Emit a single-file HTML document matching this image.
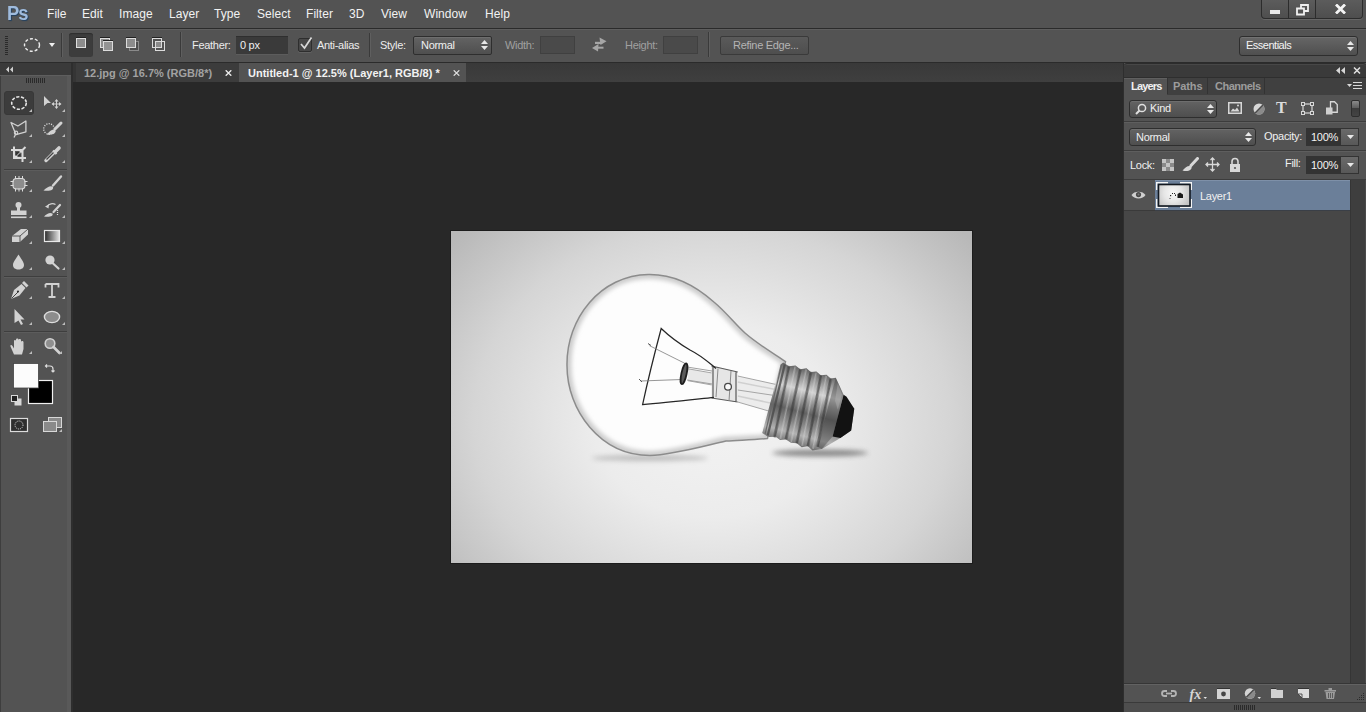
<!DOCTYPE html>
<html><head><meta charset="utf-8">
<style>
*{margin:0;padding:0;box-sizing:border-box}
html,body{width:1366px;height:712px;overflow:hidden;background:#282828;font-family:"Liberation Sans",sans-serif;}
.a{position:absolute}
#menubar{left:0;top:0;width:1366px;height:28px;background:#535353}
#menubar .m{position:absolute;top:7px;font-size:12px;letter-spacing:0.05px;color:#f2f2f2;line-height:14px;white-space:nowrap}
#mline{left:0;top:28px;width:1366px;height:1px;background:#2b2b2b}
#opts{left:0;top:29px;width:1366px;height:33px;background:#535353;border-top:1px solid #5e5e5e}
#oline{left:0;top:62px;width:1366px;height:1px;background:#2b2b2b}
#tools{left:0;top:63px;width:71px;height:649px;background:linear-gradient(90deg,#535353 66px,#595959 66px);border-left:1px solid #3e3e3e}
#toolhdr{left:0;top:63px;width:71px;height:13px;background:#3a3a3a;border-bottom:1px solid #5e5e5e}
#tline{left:71px;top:63px;width:2px;height:649px;background:#2e2e2e}
#tabs{left:73px;top:63px;width:1050px;height:19px;background:linear-gradient(#393939,#3f3f3f)}
#paste{left:73px;top:82px;width:1050px;height:630px;background:#282828}
#img{left:451px;top:231px;width:521px;height:332px;background:radial-gradient(ellipse 70% 75% at 52% 45%,#f4f4f4 0%,#e8e8e8 40%,#c2c2c2 100%)}
#rpanel{left:1124px;top:63px;width:242px;height:649px;background:#535353}
#rline{left:1123px;top:63px;width:1px;height:649px;background:#2e2e2e}
.txt{position:absolute;white-space:nowrap;font-size:11px;color:#e6e6e6;line-height:13px;letter-spacing:-0.3px}
.txt.b{letter-spacing:0;font-weight:bold}
</style></head><body>
<div id="menubar" class="a">
  <div class="m" style="left:47px">File</div>
  <div class="m" style="left:82px">Edit</div>
  <div class="m" style="left:119px">Image</div>
  <div class="m" style="left:169px">Layer</div>
  <div class="m" style="left:214px">Type</div>
  <div class="m" style="left:257px">Select</div>
  <div class="m" style="left:306px">Filter</div>
  <div class="m" style="left:349px">3D</div>
  <div class="m" style="left:381px">View</div>
  <div class="m" style="left:424px">Window</div>
  <div class="m" style="left:485px">Help</div>
</div>

<div class="a" style="left:7px;top:1px;font-size:20px;font-weight:bold;color:#9fbbdd;letter-spacing:-1px;line-height:24px;transform:scaleX(0.92);transform-origin:0 0;text-shadow:1px 1px 1px #23405f">Ps</div>
<div class="a" id="winctl" style="left:1261px;top:0;width:102px;height:19px;border:1px solid #2c2c2c;border-top:none;border-radius:0 0 4px 4px;background:linear-gradient(#5c5c5c,#4e4e4e);box-shadow:0 1px 0 #666">
 <div class="a" style="left:26px;top:0;width:1px;height:18px;background:#2c2c2c"></div>
 <div class="a" style="left:53px;top:0;width:1px;height:18px;background:#2c2c2c"></div>
 <div class="a" style="left:8px;top:10px;width:10px;height:4px;background:#e8e8e8"></div>
 <svg class="a" style="left:34px;top:4px" width="14" height="12" viewBox="0 0 14 12"><path d="M5 1h7v6h-7z" fill="none" stroke="#f0f0f0" stroke-width="1.8"/><path d="M1 4.5h7v6H1z" fill="#525252" stroke="#f0f0f0" stroke-width="1.8"/></svg>
 <svg class="a" style="left:73px;top:4px" width="11" height="10" viewBox="0 0 11 10"><path d="M1 0.5L10 9.5M10 0.5L1 9.5" stroke="#f4f4f4" stroke-width="2.8"/></svg>
</div>
<div id="mline" class="a"></div>
<div id="opts" class="a"></div>

<div id="optsc" class="a" style="left:0;top:29px;width:1366px;height:33px">
 <div class="a" style="left:5px;top:7px;width:3px;height:19px;background:repeating-linear-gradient(#2a2a2a 0 1px,transparent 1px 2px)"></div>
 <svg class="a" style="left:23px;top:8px" width="18" height="16" viewBox="0 0 18 16"><ellipse cx="9" cy="8" rx="7.5" ry="6.3" fill="none" stroke="#ececec" stroke-width="1.4" stroke-dasharray="3 2"/></svg>
 <svg class="a" style="left:49px;top:14px" width="6" height="4"><path d="M0 0h6L3 4z" fill="#f0f0f0"/></svg>
 <div class="a" style="left:61px;top:4px;width:1px;height:24px;background:#3a3a3a;box-shadow:1px 0 0 #5f5f5f"></div>
 <div class="a" style="left:69px;top:4px;width:24px;height:24px;background:#3c3c3c;border-radius:3px;box-shadow:inset 0 1px 1px #2e2e2e"></div>
 <div class="a" style="left:76px;top:9px;width:10px;height:10px;border:1px solid #dedede;background:#8c8c8c;box-shadow:0 -1px 0 #222"></div>
 <div class="a" style="left:100px;top:9px;width:10px;height:10px;border:1px solid #dcdcdc;background:#8c8c8c;box-shadow:0 -1px 0 #222"></div>
 <div class="a" style="left:103px;top:12px;width:10px;height:10px;border:1px solid #dcdcdc;background:#939393;box-shadow:0 -1px 0 #222"></div>
 <div class="a" style="left:129px;top:12px;width:10px;height:10px;border:1px solid #8a8a8a;background:#4e4e4e"></div>
 <div class="a" style="left:126px;top:9px;width:10px;height:10px;border:1px solid #dcdcdc;background:#8c8c8c;box-shadow:0 -1px 0 #222"></div>
 <div class="a" style="left:152px;top:9px;width:10px;height:10px;border:1px solid #dcdcdc;background:transparent;box-shadow:0 -1px 0 #222"></div>
 <div class="a" style="left:156px;top:13px;width:5px;height:5px;background:#8c8c8c"></div>
 <div class="a" style="left:155px;top:12px;width:10px;height:10px;border:1px solid #dcdcdc"></div>
 <div class="a" style="left:180px;top:3px;width:1px;height:25px;background:#3a3a3a;box-shadow:1px 0 0 #5f5f5f"></div>
 <div class="txt" style="left:192px;top:10px;color:#ececec">Feather:</div>
 <div class="a" style="left:236px;top:7px;width:52px;height:18px;background:#3a3a3a;box-shadow:inset 0 1px 0 #2f2f2f,0 1px 0 #5c5c5c"></div>
 <div class="txt" style="left:240px;top:10px;color:#f0f0f0">0 px</div>
 <div class="a" style="left:298px;top:9px;width:14px;height:14px;background:#484848;border:1px solid #2e2e2e;border-radius:2px;box-shadow:0 1px 0 #626262"></div>
 <svg class="a" style="left:299px;top:7px" width="14" height="14" viewBox="0 0 14 14"><path d="M2 8L5.5 12L12.5 1.5" fill="none" stroke="#d8d8d8" stroke-width="1.7"/></svg>
 <div class="txt" style="left:317px;top:10px;color:#ececec">Anti-alias</div>
 <div class="a" style="left:369px;top:4px;width:1px;height:24px;background:#3a3a3a;box-shadow:1px 0 0 #5f5f5f"></div>
 <div class="txt" style="left:380px;top:10px;color:#ececec">Style:</div>
 <div class="a" style="left:413px;top:7px;width:79px;height:19px;border:1px solid #2e2e2e;border-radius:2px;background:linear-gradient(#636363,#4f4f4f);box-shadow:inset 0 1px 0 #6e6e6e"></div>
 <div class="txt" style="left:421px;top:10px;color:#f0f0f0">Normal</div>
 <svg class="a" style="left:481px;top:10px" width="7" height="12" viewBox="0 0 7 12"><path d="M0 5L3.5 1L7 5zM0 7L3.5 11L7 7z" fill="#e8e8e8"/></svg>
 <div class="txt" style="left:505px;top:10px;color:#a0a0a0">Width:</div>
 <div class="a" style="left:540px;top:7px;width:35px;height:18px;background:#4a4a4a;border:1px solid #404040"></div>
 <svg class="a" style="left:591px;top:8px" width="17" height="16" viewBox="0 0 17 16"><path d="M8.5 0.6L15.5 4.2L9.5 8z" fill="#a6a6a6"/><rect x="4" y="4.8" width="6" height="2.2" fill="#a6a6a6"/><path d="M1 11L7.5 7L7 14.6z" fill="#a6a6a6"/><rect x="6.5" y="9.7" width="6" height="2" fill="#a6a6a6"/></svg>
 <div class="txt" style="left:625px;top:10px;color:#a0a0a0">Height:</div>
 <div class="a" style="left:663px;top:7px;width:35px;height:18px;background:#4a4a4a;border:1px solid #404040"></div>
 <div class="a" style="left:708px;top:3px;width:1px;height:25px;background:#3a3a3a;box-shadow:1px 0 0 #5f5f5f"></div>
 <div class="a" style="left:720px;top:7px;width:89px;height:19px;border:1px solid #3a3a3a;border-radius:2px;background:linear-gradient(#5a5a5a,#4e4e4e)"></div>
 <div class="txt" style="left:733px;top:10px;color:#b4b4b4">Refine Edge...</div>
 <div class="a" style="left:1239px;top:7px;width:119px;height:20px;border:1px solid #2e2e2e;border-radius:3px;background:linear-gradient(#666,#4f4f4f);box-shadow:inset 0 1px 0 #727272"></div>
 <div class="txt" style="left:1246px;top:10px;color:#f4f4f4;letter-spacing:-0.5px">Essentials</div>
 <svg class="a" style="left:1347px;top:11px" width="7" height="12" viewBox="0 0 7 12"><path d="M0 5L3.5 1L7 5zM0 7L3.5 11L7 7z" fill="#e8e8e8"/></svg>
</div>
<div id="oline" class="a"></div>
<div id="tools" class="a"></div>
<div id="toolhdr" class="a"></div>

<svg class="a" style="left:0;top:0" width="71" height="712" viewBox="0 0 71 712">
 <path d="M6 66.5L9 69.5L6 72.5zM10 66.5L13 69.5L10 72.5z" fill="#d0d0d0" transform="translate(19,0) scale(-1,1) translate(0,0)"/>
 <g fill="#2a2a2a"><rect x="26" y="78" width="1" height="5"/><rect x="28" y="78" width="1" height="5"/><rect x="30" y="78" width="1" height="5"/><rect x="32" y="78" width="1" height="5"/><rect x="34" y="78" width="1" height="5"/><rect x="36" y="78" width="1" height="5"/><rect x="38" y="78" width="1" height="5"/><rect x="40" y="78" width="1" height="5"/><rect x="42" y="78" width="1" height="5"/><rect x="44" y="78" width="1" height="5"/></g>
 <rect x="4.5" y="91.5" width="29" height="23" rx="2.5" fill="#3c3c3c" stroke="#383838"/>
 <ellipse cx="19" cy="103" rx="7.3" ry="6.3" fill="none" stroke="#e6e6e6" stroke-width="1.6" stroke-dasharray="3.2 1.6"/>
 <path d="M44 96L51 103H47.5L44 106z" fill="#d2d2d2"/>
 <path d="M56.5 100.5V107.5M52.5 104H60.5" fill="none" stroke="#d2d2d2" stroke-width="1"/><path d="M56.5 99L54.5 101.5H58.5zM56.5 109L54.5 106.5H58.5zM51.5 104L54 102V106zM61.5 104L59 102V106z" fill="#d2d2d2"/>
 <path d="M11 122.5L17.9 126L25.9 121V131.8L16 134.7z" fill="none" stroke="#d2d2d2" stroke-width="1.3" stroke-linejoin="round"/>
 <circle cx="16" cy="132.8" r="1.7" fill="none" stroke="#d2d2d2" stroke-width="1.1"/><path d="M15.5 134.5L14 137.5" stroke="#d2d2d2" stroke-width="1.2"/>
 <circle cx="49" cy="129" r="5.3" fill="none" stroke="#dcdcdc" stroke-width="1.3" stroke-dasharray="1.1 1.3"/>
 <path d="M61 123L55.5 128.5" stroke="#d2d2d2" stroke-width="3" stroke-linecap="round"/>
 <path d="M47 134.5C49.5 131 52.5 128.5 55.5 130C56.5 133 53 135.5 47 134.5z" fill="#d2d2d2"/>
 <path d="M11 150H22.5V162M14 146.5V158H26M15 157.5L25.5 147" fill="none" stroke="#dadada" stroke-width="2"/>
 <rect x="16" y="152" width="4.5" height="4" fill="#333"/><path d="M16 156.5L21.5 151" stroke="#ddd" stroke-width="1"/>
 <path d="M46 160.5L54.5 152" stroke="#d2d2d2" stroke-width="3.4" stroke-linecap="round"/>
 <path d="M46.5 159.5L54 152" stroke="#444" stroke-width="1.2"/>
 <path d="M53 150.5L56.5 154" stroke="#d2d2d2" stroke-width="2.2"/>
 <path d="M55.5 151.5L59 148" stroke="#d2d2d2" stroke-width="3.6" stroke-linecap="round"/>
 <rect x="4" y="169" width="63" height="1" fill="#3e3e3e"/><rect x="4" y="170" width="63" height="1" fill="#5c5c5c"/>
 <rect x="13" y="178.5" width="12" height="10.5" rx="3.5" fill="#8c8c8c" stroke="#dcdcdc" stroke-width="1.1"/>
 <path d="M15.5 176V179M19 176V179M22.5 176V179M15.5 188.5V191.5M19 188.5V191.5M22.5 188.5V191.5M10.5 181.5H13.5M10.5 185.5H13.5M24.5 181.5H27.5M24.5 185.5H27.5" stroke="#dcdcdc" stroke-width="1"/>
 <path d="M61 176.5L53 185.5" stroke="#d2d2d2" stroke-width="2.4" stroke-linecap="round"/>
 <path d="M43.5 190.5C47 187 51 185 53 187C54 190 50 191.5 43.5 190.5z" fill="#d2d2d2"/>
 <circle cx="18.5" cy="205" r="3" fill="#d2d2d2"/><rect x="17" y="206" width="3" height="5" fill="#d2d2d2"/>
 <rect x="11" y="210.5" width="15.5" height="4.5" fill="#d2d2d2"/><rect x="11" y="216.5" width="15.5" height="1.6" fill="#d2d2d2"/>
 <path d="M47 206.5C49 203.5 53 203 55.5 204.5" fill="none" stroke="#d2d2d2" stroke-width="1.3"/><path d="M45 206.5L49 204.5L48.5 208.5z" fill="#d2d2d2"/>
 <path d="M60 205L53.5 212" stroke="#d2d2d2" stroke-width="2.2" stroke-linecap="round"/>
 <path d="M44 216.5C47 213.5 50 212 52.5 213.5C53.5 216 50 217.5 44 216.5z" fill="#d2d2d2"/>
 <path d="M57.5 210V216" stroke="#ddd" stroke-width="1.2" stroke-dasharray="1 1"/>
 <path d="M12 236L21 229H28L28 234.5L20 242H12z" fill="#d2d2d2"/><path d="M12 236H20L28 229M20 236V242" fill="none" stroke="#4a4a4a" stroke-width="0.9"/>
 <defs><linearGradient id="gr" x1="0" x2="1"><stop offset="0" stop-color="#2a2a2a"/><stop offset="1" stop-color="#e4e4e4"/></linearGradient></defs>
 <rect x="44.5" y="230.5" width="15" height="11" fill="url(#gr)" stroke="#e8e8e8" stroke-width="1.2"/>
 <path d="M18.5 254.5C16 259 13 262 13 265C13 268 15.5 269.5 18.5 269.5C21.5 269.5 24 268 24 265C24 262 21 259 18.5 254.5z" fill="#d2d2d2"/>
 <circle cx="50" cy="260" r="4.6" fill="#d2d2d2"/><path d="M52.5 263L58.5 268.5" stroke="#d2d2d2" stroke-width="2.2" stroke-linecap="round"/>
 <rect x="4" y="276" width="63" height="1" fill="#3e3e3e"/><rect x="4" y="277" width="63" height="1" fill="#5c5c5c"/>
 <path d="M11 299L14 290L21.5 284L25.5 288L19.5 295.5z" fill="#d2d2d2"/>
 <path d="M22 283L24 281L28.5 285.5L26.5 287.5z" fill="#d2d2d2"/>
 <path d="M11.5 298.5L18 292" stroke="#444" stroke-width="1"/><circle cx="18" cy="291.5" r="1.1" fill="#333"/>
 <path d="M45.5 284H58.5V287.5M45.5 284V287.5M52 284V297M48.5 297H55.5" fill="none" stroke="#d2d2d2" stroke-width="1.8"/>
 <path d="M14.5 309L24.5 319.5H20.5L23 324L21 325L18.5 320.5L14.5 323z" fill="#d2d2d2"/>
 <ellipse cx="52" cy="317" rx="7.6" ry="5.6" fill="#8c8c8c" stroke="#dedede" stroke-width="1.4"/>
 <rect x="4" y="331" width="63" height="1" fill="#3e3e3e"/><rect x="4" y="332" width="63" height="1" fill="#5c5c5c"/>
 <path d="M14 354.5L10.5 346.5C10 345 11.5 344.5 12.5 346L14 348.5V341C14 339.5 16 339.5 16 341V346V339.5C16 338 18.5 338 18.5 339.5V346V340C18.5 338.5 21 338.5 21 340V346.5V342C21 340.5 23.5 340.5 23.5 342V349L22 354.5z" fill="#d2d2d2"/>
 <circle cx="50" cy="343.5" r="4.8" fill="#8f8f8f" stroke="#d2d2d2" stroke-width="1.6"/><path d="M53.5 347L59.5 353" stroke="#d2d2d2" stroke-width="2.6" stroke-linecap="round"/>
 <rect x="28.5" y="380.5" width="24" height="23" fill="#000" stroke="#f0f0f0" stroke-width="1.2"/>
 <rect x="13.5" y="363.5" width="25" height="24.5" fill="#fcfcfc" stroke="#444" stroke-width="0.8"/>
 <path d="M47 364.5L45.5 366L47 367.5M45.5 366H50C52 366 53 367 53 369V372M51.5 370.5L53 372L54.5 370.5" fill="none" stroke="#dcdcdc" stroke-width="1.2"/>
 <rect x="14.5" y="398.5" width="7" height="7" fill="#d8d8d8"/><rect x="11.5" y="395.5" width="6" height="6" fill="#222" stroke="#d8d8d8" stroke-width="1"/>
 <rect x="10.5" y="418.5" width="17" height="13" fill="#2e2e2e" stroke="#dcdcdc" stroke-width="1.2"/>
 <circle cx="19" cy="425" r="4" fill="none" stroke="#e0e0e0" stroke-width="1" stroke-dasharray="1 1"/>
 <rect x="48.5" y="417.5" width="13" height="10" fill="#8a8a8a" stroke="#d8d8d8" stroke-width="1"/>
 <rect x="43.5" y="421.5" width="13" height="10" fill="#8a8a8a" stroke="#d8d8d8" stroke-width="1"/>
 <path d="M32 109V112H29z" fill="#bdbdbd"/><path d="M65 109V112H62z" fill="#bdbdbd"/><path d="M32 134V137H29z" fill="#bdbdbd"/><path d="M65 134V137H62z" fill="#bdbdbd"/><path d="M32 160V163H29z" fill="#bdbdbd"/><path d="M65 160V163H62z" fill="#bdbdbd"/><path d="M32 189V192H29z" fill="#bdbdbd"/><path d="M65 189V192H62z" fill="#bdbdbd"/><path d="M32 215V218H29z" fill="#bdbdbd"/><path d="M65 215V218H62z" fill="#bdbdbd"/><path d="M32 241V244H29z" fill="#bdbdbd"/><path d="M65 241V244H62z" fill="#bdbdbd"/><path d="M32 267V270H29z" fill="#bdbdbd"/><path d="M65 267V270H62z" fill="#bdbdbd"/><path d="M32 296V299H29z" fill="#bdbdbd"/><path d="M65 296V299H62z" fill="#bdbdbd"/><path d="M32 322V325H29z" fill="#bdbdbd"/><path d="M65 322V325H62z" fill="#bdbdbd"/><path d="M32 351V354H29z" fill="#bdbdbd"/>
 <path d="M62 429V432H59z" fill="#bdbdbd"/>
 <path d="M62 351V354H59z" fill="#bdbdbd"/>
</svg>
<div id="tline" class="a"></div>
<div id="tabs" class="a"></div>
<div id="paste" class="a"></div>
<div class="a" style="left:73px;top:63px;width:166px;height:19px;background:#3c3c3c;border-left:3px solid #353535"></div>
<div class="txt b" style="left:84px;top:67px;font-weight:bold;color:#a2a2a2;font-size:11px">12.jpg @ 16.7% (RGB/8*)</div>
<svg class="a" style="left:225px;top:70px" width="7" height="6" viewBox="0 0 7 6"><path d="M0.7 0.3L6.3 5.7M6.3 0.3L0.7 5.7" stroke="#ececec" stroke-width="1.4"/></svg>
<div class="a" style="left:239px;top:63px;width:227px;height:19px;background:#535353"></div>
<div class="txt b" style="left:248px;top:67px;font-weight:bold;color:#f2f2f2;font-size:11px">Untitled-1 @ 12.5% (Layer1, RGB/8) *</div>
<svg class="a" style="left:453px;top:70px" width="7" height="6" viewBox="0 0 7 6"><path d="M0.7 0.3L6.3 5.7M6.3 0.3L0.7 5.7" stroke="#e0e0e0" stroke-width="1.2"/></svg>

<div class="a" style="left:450px;top:230px;width:523px;height:334px;background:#1c1c1c"></div>
<svg class="a" style="left:451px;top:231px" width="521" height="332" viewBox="451 231 521 332">
 <defs>
  <radialGradient id="bg" cx="712" cy="420" r="340" gradientUnits="userSpaceOnUse" gradientTransform="translate(712 420) scale(1 0.82) translate(-712 -420)">
   <stop offset="0" stop-color="#f3f3f3"/><stop offset="0.35" stop-color="#ececec"/><stop offset="0.7" stop-color="#d5d5d5"/><stop offset="1" stop-color="#b8b8b8"/>
  </radialGradient>
  <filter id="blur3" x="-50%" y="-300%" width="200%" height="700%"><feGaussianBlur stdDeviation="2.5"/></filter>
  <filter id="blur15" x="-10%" y="-10%" width="120%" height="120%"><feGaussianBlur stdDeviation="1.6"/></filter>
  <filter id="blur25" x="-10%" y="-10%" width="120%" height="120%"><feGaussianBlur stdDeviation="2.2"/></filter><filter id="blur08"><feGaussianBlur stdDeviation="0.7"/></filter>
  <clipPath id="gclip"><path d="M785.5 361.6C778 356 760 346 745 333C735 324 726 312 713.9 302C695 285 672 274 648.5 274.4C601 275 566 318 567 366C567 410 600 455.5 650 455.5C672 455 700 447 726 441C740 440 755 440 767.5 438.4z"/></clipPath>
  <linearGradient id="metal" x1="0" y1="-40" x2="0" y2="38" gradientUnits="userSpaceOnUse">
   <stop offset="0" stop-color="#626262"/><stop offset="0.12" stop-color="#949494"/><stop offset="0.28" stop-color="#d2d2d2"/><stop offset="0.4" stop-color="#9c9c9c"/>
   <stop offset="0.56" stop-color="#626262"/><stop offset="0.7" stop-color="#848484"/><stop offset="0.85" stop-color="#b2b2b2"/><stop offset="1" stop-color="#6a6a6a"/>
  </linearGradient>
 </defs>
 <rect x="451" y="231" width="521" height="332" fill="url(#bg)"/>
 <ellipse cx="650" cy="458" rx="58" ry="3" fill="#8c8c8c" opacity="0.5" filter="url(#blur3)"/>
 <ellipse cx="820" cy="453" rx="48" ry="3.5" fill="#4a4a4a" opacity="0.6" filter="url(#blur3)"/>
 <path d="M785.5 361.6C778 356 760 346 745 333C735 324 726 312 713.9 302C695 285 672 274 648.5 274.4C601 275 566 318 567 366C567 410 600 455.5 650 455.5C672 455 700 447 726 441C740 440 755 440 767.5 438.4z" fill="#fdfdfd"/>
 <g clip-path="url(#gclip)">
  <path d="M785.5 361.6C778 356 760 346 745 333C735 324 726 312 713.9 302C695 285 672 274 648.5 274.4C601 275 566 318 567 366C567 410 600 455.5 650 455.5C672 455 700 447 726 441C740 440 755 440 767.5 438.4z" fill="none" stroke="#cdcdcd" stroke-width="9" filter="url(#blur25)"/>
  
 </g>
 <path d="M785.5 361.6C778 356 760 346 745 333C735 324 726 312 713.9 302C695 285 672 274 648.5 274.4C601 275 566 318 567 366C567 410 600 455.5 650 455.5C672 455 700 447 726 441C740 440 755 440 767.5 438.4z" fill="none" stroke="#8c8c8c" stroke-width="1.5"/>
 <!-- stem -->
 <path d="M688 368.8L712 373L712 385L688 380.7z" fill="#e8e8e8"/><path d="M737.7 376L780.7 385.5L771 411.7L737.7 402z" fill="#ececec"/>
 <g fill="none" stroke="#a6a6a6" stroke-width="1"><path d="M688 368.8L712 373"/><path d="M688 380.7L712 385"/><path d="M737.7 376L780.7 385.5"/><path d="M737.7 390L778 396"/><path d="M737.7 402L771 411.7"/></g>
 <path d="M737.7 382L778 390M737.7 396L775 404" stroke="#d0d0d0" stroke-width="1.5"/>
 <path d="M711.5 366L737.7 372L737.7 402L711.5 398z" fill="#e6e6e6"/>
 <path d="M711.5 366L737.7 372M711.5 398L737.7 402M713 366V398M736 372V402" stroke="#5a5a5a" stroke-width="1.2" fill="none"/>
 <path d="M718 368.5L716 397M731 371L729 401" stroke="#8a8a8a" stroke-width="1" fill="none"/>
 <circle cx="728" cy="386.7" r="3.4" fill="#fafafa" stroke="#4a4a4a" stroke-width="1.3"/>
 <!-- filament -->
 <path d="M716 368.5C708 362 702 356 690 350C678 343 668 335 661.2 328.5C656 348 649 375 642.6 404.6C665 403 690 400 713.9 397.4" fill="none" stroke="#262626" stroke-width="1.25"/>
 <path d="M649.4 345.6L684.8 363.3M640.6 381L681.9 379.5" fill="none" stroke="#7c7c7c" stroke-width="0.8"/>
 <path d="M648 343.5L651 345.5M639 379L642 382" stroke="#555" stroke-width="1"/>
 <path d="M687 367L712 371M687 380L712 384" stroke="#a0a0a0" stroke-width="1"/>
 <ellipse cx="684" cy="373.7" rx="2.6" ry="10.6" transform="rotate(12 684 373.7)" fill="#5a5a5a" stroke="#1e1e1e" stroke-width="1.8"/>
 <!-- base -->
 <g transform="translate(800 408) rotate(15)">
  <path d="M-30 -37L-28 -39.6L-21.5 -37.5L-15.4 -40L-9.7 -37.5L-4 -40L1.2 -37.5L6.4 -39.5L11.7 -37L17 -39L22 -36.5L26.7 -38.5L38.7 -24L42 -23L52.6 -13.4L55.2 8.4L46.8 18.5L31.7 34L23.1 37.8L17.5 35L11.8 37.6L6 35L0.3 36L-5.5 34L-11 36L-16 34L-22 36L-24 36L-30 34z" fill="url(#metal)"/>
  <g fill="none" stroke="#333" stroke-width="2.6" opacity="0.6" filter="url(#blur08)">
   <path d="M-21.5 -37.5L-17 35"/><path d="M-9.7 -37.5L-5.5 34"/><path d="M1.2 -37.5L6 35"/><path d="M11.7 -37L17.5 35"/><path d="M22 -36.5L27 33"/>
  </g>
  <g fill="none" stroke="#e2e2e2" stroke-width="1.5" opacity="0.4" filter="url(#blur08)">
   <path d="M-15.4 -39L-11 35"/><path d="M-4 -39L0.3 35"/><path d="M6.4 -38.5L11.8 36"/><path d="M17 -38L23.1 36"/>
  </g>
  <path d="M-26 -38L-24 35" stroke="#4a4a4a" stroke-width="2.2" opacity="0.8"/>
  <path d="M-29 -37L-27 34" stroke="#6a6a6a" stroke-width="1.2"/>
  <path d="M38.7 -24L42 -23L52.6 -13.4L55.2 8.4L46.8 18.5L38.9 19.2z" fill="#121212"/>
  <path d="M26.7 -38.5L38.7 -24L38.9 19.2L31.7 34L27 33z" fill="#3c3c3c" opacity="0.4"/>
  <path d="M30 -34L37 -24L37 -8L32 -16z" fill="#c0c0c0" opacity="0.35"/>
 </g>
</svg>

<div id="rline" class="a"></div>
<div id="rpanel" class="a"></div>
<div class="a" style="left:1124px;top:63px;width:242px;height:15px;background:#3a3a3a;border-top:1px solid #2c2c2c;border-bottom:1px solid #2e2e2e;box-shadow:inset 0 1px 0 #474747;border-radius:3px 3px 0 0"></div>
<svg class="a" style="left:1336px;top:67px" width="9" height="7" viewBox="0 0 9 7"><path d="M4 0L0 3.5L4 7zM9 0L5 3.5L9 7z" fill="#d6d6d6"/></svg>
<svg class="a" style="left:1353px;top:67px" width="8" height="7" viewBox="0 0 8 7"><path d="M1 0.5L7 6.5M7 0.5L1 6.5" stroke="#e0e0e0" stroke-width="1.5"/></svg>
<div class="a" style="left:1124px;top:78px;width:242px;height:17px;background:#404040"></div>
<div class="a" style="left:1124px;top:78px;width:43px;height:17px;background:#535353;box-shadow:inset 0 1px 0 #606060"></div>
<div class="a" style="left:1167px;top:78px;width:1px;height:16px;background:#333"></div>
<div class="a" style="left:1207px;top:78px;width:1px;height:16px;background:#333"></div>
<div class="a" style="left:1264px;top:78px;width:1px;height:16px;background:#333"></div>
<div class="txt" style="left:1131px;top:80px;color:#f0f0f0;font-weight:bold;font-size:11px;letter-spacing:-0.8px">Layers</div>
<div class="txt" style="left:1173px;top:80px;color:#9c9c9c;font-weight:bold;font-size:11px;letter-spacing:-0.1px">Paths</div>
<div class="txt" style="left:1215px;top:80px;color:#9c9c9c;font-weight:bold;font-size:11px;letter-spacing:-0.5px">Channels</div>
<svg class="a" style="left:1347px;top:81px" width="15" height="10" viewBox="0 0 15 10"><path d="M0 3H5L2.5 6z" fill="#d8d8d8"/><path d="M6 1.5H15M6 4.5H15M6 7.5H15" stroke="#d8d8d8" stroke-width="1.2"/></svg>
<div class="a" style="left:1129px;top:100px;width:88px;height:18px;border:1px solid #2e2e2e;border-radius:3px;background:linear-gradient(#636363,#4e4e4e);box-shadow:inset 0 1px 0 #6e6e6e"></div>
<svg class="a" style="left:1135px;top:103px" width="12" height="12" viewBox="0 0 12 12"><circle cx="7" cy="5" r="3.6" fill="none" stroke="#e0e0e0" stroke-width="1.5"/><path d="M4.5 7.5L1 11" stroke="#e0e0e0" stroke-width="2"/></svg>
<div class="txt" style="left:1150px;top:102px;color:#f0f0f0">Kind</div>
<svg class="a" style="left:1207px;top:103px" width="7" height="12" viewBox="0 0 7 12"><path d="M0 5L3.5 1L7 5zM0 7L3.5 11L7 7z" fill="#e8e8e8"/></svg>
<svg class="a" style="left:1228px;top:102px" width="14" height="12" viewBox="0 0 14 12"><rect x="0.75" y="0.75" width="12.5" height="10.5" fill="none" stroke="#d8d8d8" stroke-width="1.5"/><path d="M2.5 9.5L5 6.5L7 8L9 5.5L11.5 9.5z" fill="#d8d8d8"/><circle cx="10" cy="3.5" r="1" fill="#d8d8d8"/></svg>
<svg class="a" style="left:1253px;top:103px" width="12" height="12" viewBox="0 0 12 12"><circle cx="6" cy="6" r="5.5" fill="#d8d8d8"/><path d="M9.9 2.1A5.5 5.5 0 0 1 2.1 9.9z" fill="#8a8a8a"/><path d="M9.9 2.1L2.1 9.9" stroke="#4a4a4a" stroke-width="1.4"/></svg>
<div class="a" style="left:1276px;top:99px;font-family:'Liberation Serif',serif;font-size:16px;font-weight:bold;color:#dcdcdc;line-height:18px">T</div>
<svg class="a" style="left:1301px;top:102px" width="13" height="13" viewBox="0 0 13 13"><rect x="2" y="2" width="9" height="9" fill="none" stroke="#d8d8d8" stroke-width="1.2"/><g fill="#555" stroke="#d8d8d8" stroke-width="1"><rect x="0.5" y="0.5" width="3" height="3"/><rect x="9.5" y="0.5" width="3" height="3"/><rect x="0.5" y="9.5" width="3" height="3"/><rect x="9.5" y="9.5" width="3" height="3"/></g></svg>
<svg class="a" style="left:1326px;top:101px" width="12" height="14" viewBox="0 0 12 14"><path d="M4.5 0.75H8.5L11.25 3.5V11.25H4.5z" fill="none" stroke="#d8d8d8" stroke-width="1.3"/><rect x="0" y="6.5" width="6.5" height="7" fill="#cfcfcf"/></svg>
<div class="a" style="left:1351px;top:100px;width:9px;height:17px;background:linear-gradient(#8a8a8a,#5a5a5a 50%,#3c3c3c 50%,#444);border:1px solid #2e2e2e;border-radius:2px"></div>
<div class="a" style="left:1124px;top:121px;width:242px;height:1px;background:#3c3c3c;box-shadow:0 1px 0 #5e5e5e"></div>
<div class="a" style="left:1129px;top:128px;width:127px;height:18px;border:1px solid #2e2e2e;border-radius:3px;background:linear-gradient(#636363,#4e4e4e);box-shadow:inset 0 1px 0 #6e6e6e"></div>
<div class="txt" style="left:1136px;top:131px;color:#f0f0f0">Normal</div>
<svg class="a" style="left:1245px;top:131px" width="7" height="12" viewBox="0 0 7 12"><path d="M0 5L3.5 1L7 5zM0 7L3.5 11L7 7z" fill="#e8e8e8"/></svg>
<div class="txt" style="left:1264px;top:130px;color:#f0f0f0">Opacity:</div>
<div class="a" style="left:1306px;top:128px;width:35px;height:18px;background:#333"></div>
<div class="txt" style="left:1311px;top:131px;color:#f4f4f4">100%</div>
<div class="a" style="left:1341px;top:128px;width:18px;height:18px;background:linear-gradient(#6a6a6a,#585858);border:1px solid #333;border-left:none"></div>
<svg class="a" style="left:1347px;top:135px" width="7" height="4"><path d="M0 0h7L3.5 4z" fill="#e8e8e8"/></svg>
<div class="a" style="left:1124px;top:150px;width:242px;height:1px;background:#3c3c3c;box-shadow:0 1px 0 #5e5e5e"></div>
<div class="txt" style="left:1130px;top:159px;color:#f0f0f0">Lock:</div>
<svg class="a" style="left:1162px;top:159px" width="12" height="12" viewBox="0 0 12 12"><rect width="12" height="12" fill="#c4c4c4"/><g fill="#8a8a8a"><rect x="4" y="0" width="4" height="4"/><rect x="0" y="4" width="4" height="4"/><rect x="8" y="4" width="4" height="4"/><rect x="4" y="8" width="4" height="4"/></g></svg>
<svg class="a" style="left:1182px;top:157px" width="17" height="15" viewBox="0 0 17 15"><path d="M15.5 1.5L9 8.5" stroke="#d8d8d8" stroke-width="3" stroke-linecap="round"/><path d="M0.5 13.5C3.5 10 6.5 8 9.5 9.5C10.5 13 6 15 0.5 13.5z" fill="#d8d8d8"/></svg>
<svg class="a" style="left:1205px;top:157px" width="15" height="15" viewBox="0 0 15 15"><path d="M7.5 1V14M1 7.5H14M5.5 3L7.5 1L9.5 3M5.5 12L7.5 14L9.5 12M3 5.5L1 7.5L3 9.5M12 5.5L14 7.5L12 9.5" fill="none" stroke="#d8d8d8" stroke-width="1.3"/></svg>
<svg class="a" style="left:1229px;top:157px" width="12" height="15" viewBox="0 0 12 15"><path d="M3 7V4.5A3 3 0 0 1 9 4.5V7" fill="none" stroke="#d8d8d8" stroke-width="1.6"/><rect x="1" y="7" width="10" height="8" fill="#d8d8d8"/><circle cx="6" cy="11" r="1.1" fill="#555"/></svg>
<div class="txt" style="left:1285px;top:157px;color:#f0f0f0">Fill:</div>
<div class="a" style="left:1306px;top:156px;width:35px;height:18px;background:#333"></div>
<div class="txt" style="left:1311px;top:159px;color:#f4f4f4">100%</div>
<div class="a" style="left:1341px;top:156px;width:18px;height:18px;background:linear-gradient(#6a6a6a,#585858);border:1px solid #333;border-left:none"></div>
<svg class="a" style="left:1347px;top:163px" width="7" height="4"><path d="M0 0h7L3.5 4z" fill="#e8e8e8"/></svg>
<div class="a" style="left:1124px;top:179px;width:242px;height:1px;background:#3c3c3c"></div>
<div class="a" style="left:1124px;top:180px;width:226px;height:503px;background:#474747"></div>
<div class="a" style="left:1350px;top:180px;width:16px;height:503px;background:#3e3e3e;border-left:1px solid #353535;border-right:1px solid #4a4a4a"></div>
<div class="a" style="left:1124px;top:180px;width:31px;height:31px;background:#535353;border-bottom:1px solid #3a3a3a"></div>
<svg class="a" style="left:1131px;top:190px" width="15" height="10" viewBox="0 0 15 10"><path d="M0.5 5C3 0.5 12 0.5 14.5 5C12 9.5 3 9.5 0.5 5z" fill="#d0d0d0"/><circle cx="7.5" cy="4.6" r="2.6" fill="#4a4a4a"/><circle cx="7.5" cy="4.6" r="1" fill="#777"/></svg>
<div class="a" style="left:1155px;top:180px;width:195px;height:31px;background:#6b7f99;border-bottom:1px solid #3a3f47;box-shadow:inset 0 1px 0 #7e90a8"></div>
<svg class="a" style="left:1150px;top:178px" width="50" height="36" viewBox="1150 178 50 36">
 <defs><radialGradient id="tg" cx="1173" cy="193" r="18" gradientUnits="userSpaceOnUse"><stop offset="0" stop-color="#f8f8f8"/><stop offset="0.5" stop-color="#e6e6e6"/><stop offset="1" stop-color="#c4c4c4"/></radialGradient></defs>
 <path d="M1156.75 190V182.75H1168M1180 182.75H1191.25V190M1156.75 199V207.25H1168M1180 207.25H1191.25V199" fill="none" stroke="#f4f4f4" stroke-width="1.5"/>
 <rect x="1158.5" y="184.5" width="31.5" height="21.5" fill="url(#tg)" stroke="#121820" stroke-width="1.6"/>
 <g fill="#222"><rect x="1170" y="195" width="1.2" height="1.2"/><rect x="1172" y="193" width="1" height="1"/><rect x="1174" y="193" width="1" height="1"/><rect x="1175" y="194.5" width="1" height="1.5"/><rect x="1169" y="198" width="2" height="0.8" opacity="0.5"/></g>
 <path d="M1177.5 194L1180 192.5L1183 194.5V198H1177.5z" fill="#1a1a1a"/>
</svg>
<div class="txt" style="left:1200px;top:190px;color:#f0f0f0">Layer1</div>
<div class="a" style="left:1124px;top:683px;width:242px;height:1px;background:#363636"></div>
<div class="a" style="left:1124px;top:684px;width:242px;height:18px;background:#535353;border-top:1px solid #626262"></div>
<div class="a" style="left:1124px;top:702px;width:242px;height:1px;background:#3a3a3a"></div>
<div class="a" style="left:1124px;top:703px;width:242px;height:9px;background:#4e4e4e"></div>
<div class="a" style="left:1234px;top:705px;width:21px;height:5px;background:repeating-linear-gradient(90deg,#2a2a2a 0 1px,transparent 1px 2px)"></div>
<svg class="a" style="left:1160px;top:686px" width="206" height="16" viewBox="1160 686 206 16">
 <g fill="none" stroke="#b4b4b4" stroke-width="1.8"><path d="M1167 691H1164.5A2.5 2.5 0 0 0 1164.5 696H1167"/><path d="M1171 691H1173.5A2.5 2.5 0 0 1 1173.5 696H1171"/><path d="M1166 693.5H1172"/></g>
 <text x="1189.5" y="698.5" font-family="Liberation Serif" font-style="italic" font-weight="bold" font-size="14" fill="#d6d6d6">fx</text>
 <path d="M1203.5 697h3.5l-1.75 2z" fill="#e0e0e0"/>
 <rect x="1217" y="689" width="13" height="10" fill="#d4d4d4"/><rect x="1217" y="688" width="13" height="1" fill="#333"/><circle cx="1223.5" cy="694" r="2.4" fill="#444"/>
 <circle cx="1250" cy="693.5" r="5.2" fill="#d4d4d4"/><path d="M1253.7 689.8A5.2 5.2 0 0 1 1246.3 697.2z" fill="#8a8a8a"/><path d="M1253.7 689.8L1246.3 697.2" stroke="#4a4a4a" stroke-width="1.4"/>
 <path d="M1257.5 697h3.5l-1.75 2z" fill="#e0e0e0"/>
 <path d="M1271 689H1276L1277 690H1283V698H1271z" fill="#d0d0d0"/><rect x="1271" y="688" width="5" height="1" fill="#333"/>
 <path d="M1298 689H1309V698H1302L1298 694z" fill="#dcdcdc"/><rect x="1298" y="688" width="11" height="1" fill="#333"/><path d="M1298 694L1302 698V694z" fill="#dcdcdc" stroke="#333" stroke-width="0.8"/>
 <g fill="#9c9c9c"><rect x="1324.5" y="690" width="11.5" height="1.6"/><rect x="1328.5" y="688" width="3.5" height="2"/><path d="M1325.5 692H1335L1334 699H1326.5z"/></g>
 <g stroke="#4a4a4a" stroke-width="0.8"><path d="M1328.5 693V698M1330.5 693V698M1332.5 693V698"/></g>
 <g fill="#2c2c2c"><rect x="1357" y="699" width="1" height="1"/><rect x="1359" y="697" width="1" height="1"/><rect x="1359" y="699" width="1" height="1"/><rect x="1361" y="695" width="1" height="1"/><rect x="1361" y="697" width="1" height="1"/><rect x="1361" y="699" width="1" height="1"/><rect x="1363" y="693" width="1" height="1"/><rect x="1363" y="695" width="1" height="1"/><rect x="1363" y="697" width="1" height="1"/><rect x="1363" y="699" width="1" height="1"/></g>
</svg>

</body></html>
